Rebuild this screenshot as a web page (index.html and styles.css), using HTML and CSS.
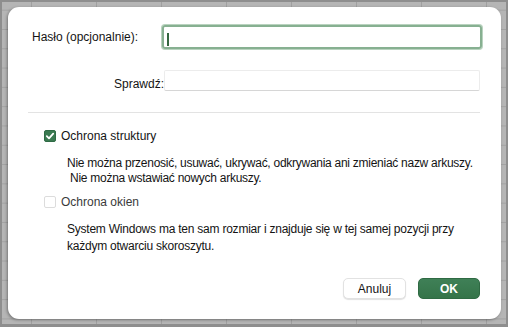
FILE: index.html
```html
<!DOCTYPE html>
<html lang="pl">
<head>
    <meta charset="UTF-8">
    <meta name="viewport" content="width=device-width, initial-scale=1.0">
    <title>Chroń skoroszyt</title>
    <link rel="stylesheet" href="styles.css">
</head>
<body>
    <div class="sheet">
        <div class="dialog">
            <div class="field-row">
                <label class="field-label" for="pass">Hasło (opcjonalnie):</label>
                <div class="pass-input" id="pass"><span class="caret"></span></div>
            </div>
            <div class="field-row verify-row">
                <label class="field-label right">Sprawdź:</label>
                <div class="verify-input"></div>
            </div>

            <div class="divider"></div>

            <div class="check-row">
                <span class="checkbox checked">
                    <svg width="12" height="12" viewBox="0 0 12 12"><path d="M2.8 6.2 L5 8.4 L9.2 3.6" fill="none" stroke="#fff" stroke-width="1.8" stroke-linecap="round" stroke-linejoin="round"/></svg>
                </span>
                <span class="check-label">Ochrona struktury</span>
            </div>
            <p class="desc first">Nie można przenosić, usuwać, ukrywać, odkrywania ani zmieniać nazw arkuszy.<br>&nbsp;Nie można wstawiać nowych arkuszy.</p>

            <div class="check-row second">
                <span class="checkbox"></span>
                <span class="check-label disabled">Ochrona okien</span>
            </div>
            <p class="desc last">System Windows ma ten sam rozmiar i znajduje się w tej samej pozycji przy<br>każdym otwarciu skoroszytu.</p>

            <div class="buttons">
                <button class="btn cancel">Anuluj</button>
                <button class="btn ok">OK</button>
            </div>
        </div>
    </div>
</body>
</html>
```

FILE: styles.css
```css
html, body {
    margin: 0;
    padding: 0;
}
body {
    width: 508px;
    height: 327px;
    overflow: hidden;
    font-family: "Liberation Sans", Arial, sans-serif;
    font-size: 12px;
    color: #141414;
}
.sheet {
    box-sizing: border-box;
    width: 508px;
    height: 327px;
    border: 2px solid #8e8e8e;
    border-bottom-width: 3px;
    background-color: #b5b5b5;
    background-image:
        linear-gradient(to right, #a0a0a0 1px, transparent 1px),
        linear-gradient(to bottom, #a2a2a2 1px, transparent 1px);
    background-size: 65px 19.3px;
    background-position: 29px 7.7px;
    padding: 5px 0 0 6px;
}
.dialog {
    box-sizing: border-box;
    width: 493px;
    height: 312px;
    background: #fff;
    border-radius: 11px;
    box-shadow: -1px 1px 3px rgba(0, 0, 0, 0.35);
    padding: 18px 19px 20px 24px;
    display: flex;
    flex-direction: column;
}
.field-row {
    display: flex;
    align-items: center;
}
.field-label {
    width: 130px;
    line-height: 16px;
}
.pass-input {
    box-sizing: border-box;
    width: 320px;
    height: 24px;
    border: 2px solid #87b091;
    box-shadow: 0 0 0 1px #b9d3bf;
    border-radius: 3px;
    padding: 4px 3px;
}
.caret {
    display: block;
    width: 2px;
    height: 13px;
    margin-top: 2px;
    background: #33663f;
}
.verify-row {
    margin-top: 19px;
}
.field-label.right {
    width: 132px;
    text-align: right;
    margin-top: 8px;
}
.verify-input {
    box-sizing: border-box;
    width: 316px;
    height: 21px;
    border: 1px solid #ececec;
    border-bottom-color: #d6d6d6;
    border-radius: 2px;
}
.divider {
    height: 1px;
    background: #e3e3e3;
    margin: 20px 2px 0 -4px;
}
.check-row {
    display: flex;
    align-items: center;
    height: 16px;
    margin-top: 15px;
    padding-left: 12px;
}
.check-row.second {
    margin-top: 8px;
}
.checkbox {
    box-sizing: border-box;
    width: 12px;
    height: 12px;
    border-radius: 2px;
    border: 1px solid #dcdcdc;
    background: #fff;
    margin-right: 5px;
    display: flex;
}
.checkbox.checked {
    background: #3a7a51;
    border-color: #2f6b45;
}
.checkbox svg {
    margin: -1px;
}
.check-label.disabled {
    color: #3a3a3a;
}
.desc {
    margin: 12px 0 0 35px;
    line-height: 15px;
    letter-spacing: -0.27px;
    white-space: nowrap;
}
.desc.last {
    margin-top: 11px;
    line-height: 17px;
    letter-spacing: -0.23px;
}
.buttons {
    margin-top: auto;
    display: flex;
    justify-content: flex-end;
    gap: 12px;
    padding-right: 2px;
}
.btn {
    box-sizing: border-box;
    height: 21px;
    font-family: "Liberation Sans", Arial, sans-serif;
    font-size: 12px;
    border-radius: 5px;
    padding: 0;
    cursor: pointer;
}
.cancel {
    width: 63px;
    background: #fff;
    color: #141414;
    border: 1px solid #e2e2e2;
    box-shadow: 0 1px 1px rgba(0, 0, 0, 0.12);
}
.ok {
    width: 62px;
    background: linear-gradient(#3f8057, #357449);
    color: #fff;
    font-weight: bold;
    border: 1px solid #2f6a43;
}
```
